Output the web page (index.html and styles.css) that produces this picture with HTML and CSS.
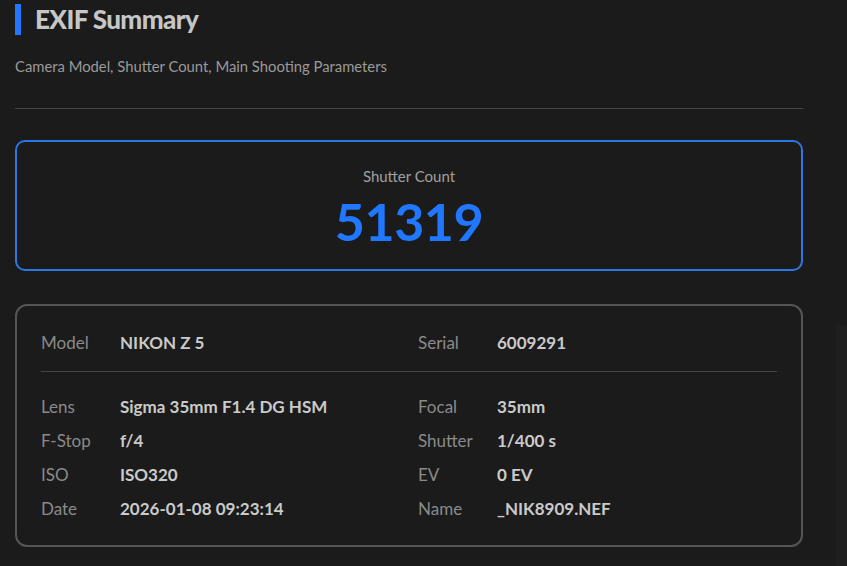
FILE: index.html
```html
<!DOCTYPE html>
<html>
<head>
<meta charset="utf-8">
<link rel="stylesheet" href="styles.css">
</head>
<body>
<div class="page">
  <h1 class="title">EXIF Summary</h1>
  <p class="subtitle">Camera Model, Shutter Count, Main Shooting Parameters</p>
  <hr class="divider">
  <div class="shutter-card">
    <div class="shutter-label">Shutter Count</div>
    <div class="shutter-value">51319</div>
  </div>
  <div class="info-card">
    <div class="grid">
      <div class="item"><span class="k">Model</span><span class="v">NIKON Z 5</span></div>
      <div class="item"><span class="k">Serial</span><span class="v">6009291</span></div>
    </div>
    <div class="sep"></div>
    <div class="grid">
      <div class="item"><span class="k">Lens</span><span class="v">Sigma 35mm F1.4 DG HSM</span></div>
      <div class="item"><span class="k">Focal</span><span class="v">35mm</span></div>
      <div class="item"><span class="k">F-Stop</span><span class="v">f/4</span></div>
      <div class="item"><span class="k">Shutter</span><span class="v">1/400 s</span></div>
      <div class="item"><span class="k">ISO</span><span class="v">ISO320</span></div>
      <div class="item"><span class="k">EV</span><span class="v">0 EV</span></div>
      <div class="item"><span class="k">Date</span><span class="v">2026-01-08 09:23:14</span></div>
      <div class="item"><span class="k">Name</span><span class="v">_NIK8909.NEF</span></div>
    </div>
  </div>
</div>
<div class="scroll-thumb"></div>
</body>
</html>
```
FILE: styles.css
```css
html, body {
  margin: 0;
  padding: 0;
  background: #1b1b1b;
  font-family: Lato, "Noto Sans", sans-serif;
  height: 100%;
  overflow: hidden;
}
.page {
  width: 788px;
  padding: 0 15px;
}
.title {
  margin: 4px 0 0 0;
  border-left: 6px solid #1f78ff;
  padding-left: 14px;
  font-size: 26px;
  line-height: 31px;
  font-weight: 900;
  color: #c6c6c6;
  letter-spacing: -0.6px;
}
.subtitle {
  margin: 21px 0 0 0;
  font-size: 14.8px;
  line-height: 20px;
  color: #9a9a9a;
}
.divider {
  border: 0;
  border-top: 1px solid #444;
  margin: 32px 0 0 0;
  height: 0;
}
.shutter-card {
  margin-top: 31px;
  border: 2px solid #2a78e6;
  border-radius: 10px;
  padding: 24px 0 20px;
  text-align: center;
}
.shutter-label {
  font-size: 15px;
  line-height: 20px;
  color: #a0a0a0;
}
.shutter-value {
  margin-top: 7px;
  font-size: 52px;
  line-height: 56px;
  font-weight: 700;
  color: #1f78ff;
  letter-spacing: -0.5px;
}
.info-card {
  margin-top: 33px;
  border: 2px solid #555;
  border-radius: 12px;
  padding: 20px 24px 19px;
}
.grid {
  display: grid;
  grid-template-columns: 1fr 1fr;
  column-gap: 18px;
}
.item {
  display: flex;
  font-size: 17px;
  line-height: 34px;
}
.k {
  width: 79px;
  flex: none;
  color: #8a8a8a;
}
.v {
  color: #cacaca;
  font-weight: 700;
}
.sep {
  border-top: 1px solid #444;
  margin: 11px 0 18px;
}
.scroll-thumb {
  position: fixed;
  right: 0;
  top: 325px;
  width: 11px;
  bottom: 0;
  background: #1f1f1f;
}
```
